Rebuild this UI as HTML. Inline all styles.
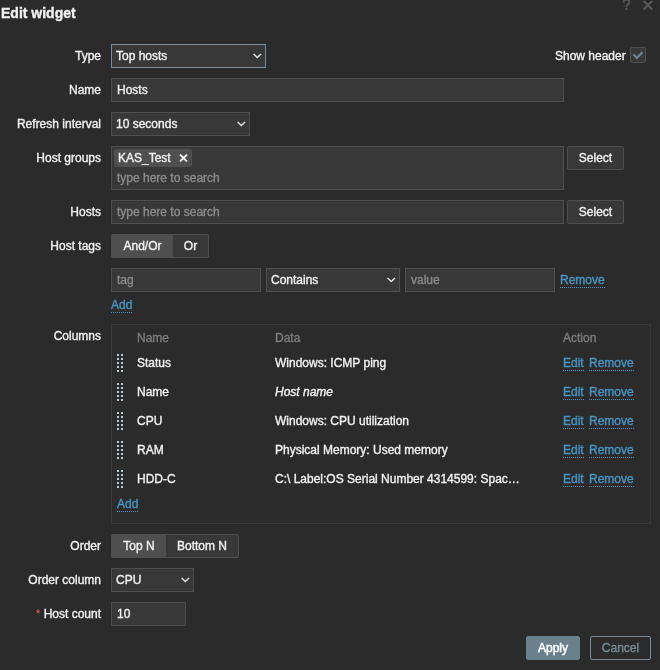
<!DOCTYPE html>
<html><head><meta charset="utf-8">
<style>
html,body{margin:0;padding:0;}
body{-webkit-text-stroke:0.35px;will-change:transform;width:660px;height:670px;overflow:hidden;background:#2b2b2b;position:relative;font-family:"Liberation Sans",sans-serif;font-size:12px;color:#f2f2f2;}
.a{position:absolute;white-space:nowrap;}
.lbl{position:absolute;right:559px;height:24px;line-height:24px;text-align:right;white-space:nowrap;}
.inp{position:absolute;box-sizing:border-box;height:24px;background:#383838;border:1px solid #4f4f4f;line-height:22px;padding-left:5px;white-space:nowrap;overflow:hidden;}
.ph{color:#8c8c8c;}
.chev{position:absolute;top:8px;width:9px;height:6px;}
.btn{position:absolute;box-sizing:border-box;height:24px;background:#383838;border:1px solid #4f4f4f;border-radius:2px;line-height:22px;text-align:center;}
.lnk{position:absolute;color:#4796c4;white-space:nowrap;line-height:14px;border-bottom:1px dotted #4796c4;}
.th{position:absolute;color:#7d7d7d;line-height:24px;}
.td{position:absolute;line-height:24px;white-space:nowrap;}
.drag{position:absolute;left:117px;width:6px;height:18px;}
</style></head><body>

<div class="a" style="left:1px;top:3px;font-size:14px;font-weight:bold;line-height:20px;">Edit widget</div>

<!-- help / close -->
<svg class="a" style="left:620px;top:-2px" width="40" height="14" viewBox="0 0 40 14">
  <path d="M3.6 4.6 Q3.6 1.6 6.5 1.6 Q9.4 1.6 9.4 4 Q9.4 5.4 8 6.4 Q6.5 7.4 6.5 9" fill="none" stroke="#575757" stroke-width="1.9"/>
  <rect x="5.5" y="10" width="2" height="2" fill="#575757"/>
  <path d="M23.6 3 L32.2 11.6 M32.2 3 L23.6 11.6" stroke="#575757" stroke-width="2.1"/>
</svg>

<!-- Type -->
<div class="lbl" style="top:44px">Type</div>
<div class="inp" style="left:111px;top:44px;width:155px;border-color:#768d99;padding-left:4px;">Top hosts
  <svg class="chev" style="left:141px" viewBox="0 0 9 6"><path d="M0.6 0.9 L4.3 4.6 L8 0.9" fill="none" stroke="#e6e6e6" stroke-width="1.35"/></svg>
</div>
<div class="a" style="left:555px;top:44px;line-height:24px;">Show header</div>
<div class="a" style="left:630px;top:47px;width:14px;height:14px;background:#383838;border:1px solid #4f4f4f;border-radius:2px;">
  <svg width="14" height="14" viewBox="0 0 14 14" style="position:absolute;left:0;top:0"><path d="M2.3 6.3 L5.9 9.9 L11.3 4.2" fill="none" stroke="#6c8796" stroke-width="2.1"/></svg>
</div>

<!-- Name -->
<div class="lbl" style="top:78px">Name</div>
<div class="inp" style="left:111px;top:78px;width:453px;">Hosts</div>

<!-- Refresh interval -->
<div class="lbl" style="top:112px">Refresh interval</div>
<div class="inp" style="left:111px;top:112px;width:139px;padding-left:4px;">10 seconds
  <svg class="chev" style="left:125px" viewBox="0 0 9 6"><path d="M0.6 0.9 L4.3 4.6 L8 0.9" fill="none" stroke="#e6e6e6" stroke-width="1.35"/></svg>
</div>

<!-- Host groups -->
<div class="lbl" style="top:146px">Host groups</div>
<div class="inp" style="left:111px;top:146px;width:453px;height:44px;padding:0;">
  <div class="a" style="left:2px;top:2px;width:78px;height:18px;background:#4f4f4f;border-radius:2px;line-height:18px;">
    <span class="a" style="left:4px;top:0">KAS_Test</span>
    <svg class="a" style="left:65px;top:5px" width="9" height="8" viewBox="0 0 9 8"><path d="M1 0.5 L8 7.5 M8 0.5 L1 7.5" stroke="#f2f2f2" stroke-width="1.8"/></svg>
  </div>
  <span class="a ph" style="left:5px;top:20px;line-height:22px;">type here to search</span>
</div>
<div class="btn" style="left:567px;top:146px;width:57px;">Select</div>

<!-- Hosts -->
<div class="lbl" style="top:200px">Hosts</div>
<div class="inp ph" style="left:111px;top:200px;width:453px;">type here to search</div>
<div class="btn" style="left:567px;top:200px;width:57px;">Select</div>

<!-- Host tags -->
<div class="lbl" style="top:234px">Host tags</div>
<div class="a" style="left:111px;top:234px;width:96px;height:22px;border:1px solid #4f4f4f;border-radius:2px;background:#383838;overflow:hidden;">
  <div class="a" style="left:0;top:0;width:61px;height:22px;background:#4f4f4f;line-height:22px;text-align:center;">And/Or</div>
  <div class="a" style="left:61px;top:0;width:35px;height:22px;line-height:22px;text-align:center;">Or</div>
</div>

<div class="inp ph" style="left:111px;top:268px;width:150px;">tag</div>
<div class="inp" style="left:266px;top:268px;width:134px;padding-left:4px;">Contains
  <svg class="chev" style="left:120px" viewBox="0 0 9 6"><path d="M0.6 0.9 L4.3 4.6 L8 0.9" fill="none" stroke="#e6e6e6" stroke-width="1.35"/></svg>
</div>
<div class="inp ph" style="left:405px;top:268px;width:150px;">value</div>
<div class="lnk" style="left:560px;top:273px;">Remove</div>
<div class="lnk" style="left:111px;top:298px;">Add</div>

<!-- Columns -->
<div class="lbl" style="top:324px;line-height:24px;">Columns</div>
<div class="a" style="left:111px;top:324px;width:538px;height:198px;border:1px solid #383838;"></div>
<div class="th" style="left:137px;top:326px">Name</div>
<div class="th" style="left:275px;top:326px">Data</div>
<div class="th" style="left:563px;top:326px">Action</div>

<svg class="drag" style="top:354px" viewBox="0 0 6 18" fill="#bccdd5"><rect x="0" y="0" width="2" height="2"/><rect x="4" y="0" width="2" height="2"/><rect x="0" y="4" width="2" height="2"/><rect x="4" y="4" width="2" height="2"/><rect x="0" y="8" width="2" height="2"/><rect x="4" y="8" width="2" height="2"/><rect x="0" y="12" width="2" height="2"/><rect x="4" y="12" width="2" height="2"/><rect x="0" y="16" width="2" height="2"/><rect x="4" y="16" width="2" height="2"/></svg>
<div class="td" style="left:137px;top:351px">Status</div>
<div class="td" style="left:275px;top:351px;">Windows: ICMP ping</div>
<div class="lnk" style="left:563px;top:356px">Edit</div>
<div class="lnk" style="left:589px;top:356px">Remove</div>
<svg class="drag" style="top:383px" viewBox="0 0 6 18" fill="#bccdd5"><rect x="0" y="0" width="2" height="2"/><rect x="4" y="0" width="2" height="2"/><rect x="0" y="4" width="2" height="2"/><rect x="4" y="4" width="2" height="2"/><rect x="0" y="8" width="2" height="2"/><rect x="4" y="8" width="2" height="2"/><rect x="0" y="12" width="2" height="2"/><rect x="4" y="12" width="2" height="2"/><rect x="0" y="16" width="2" height="2"/><rect x="4" y="16" width="2" height="2"/></svg>
<div class="td" style="left:137px;top:380px">Name</div>
<div class="td" style="left:275px;top:380px; font-style:italic;">Host name</div>
<div class="lnk" style="left:563px;top:385px">Edit</div>
<div class="lnk" style="left:589px;top:385px">Remove</div>
<svg class="drag" style="top:412px" viewBox="0 0 6 18" fill="#bccdd5"><rect x="0" y="0" width="2" height="2"/><rect x="4" y="0" width="2" height="2"/><rect x="0" y="4" width="2" height="2"/><rect x="4" y="4" width="2" height="2"/><rect x="0" y="8" width="2" height="2"/><rect x="4" y="8" width="2" height="2"/><rect x="0" y="12" width="2" height="2"/><rect x="4" y="12" width="2" height="2"/><rect x="0" y="16" width="2" height="2"/><rect x="4" y="16" width="2" height="2"/></svg>
<div class="td" style="left:137px;top:409px">CPU</div>
<div class="td" style="left:275px;top:409px;">Windows: CPU utilization</div>
<div class="lnk" style="left:563px;top:414px">Edit</div>
<div class="lnk" style="left:589px;top:414px">Remove</div>
<svg class="drag" style="top:441px" viewBox="0 0 6 18" fill="#bccdd5"><rect x="0" y="0" width="2" height="2"/><rect x="4" y="0" width="2" height="2"/><rect x="0" y="4" width="2" height="2"/><rect x="4" y="4" width="2" height="2"/><rect x="0" y="8" width="2" height="2"/><rect x="4" y="8" width="2" height="2"/><rect x="0" y="12" width="2" height="2"/><rect x="4" y="12" width="2" height="2"/><rect x="0" y="16" width="2" height="2"/><rect x="4" y="16" width="2" height="2"/></svg>
<div class="td" style="left:137px;top:438px">RAM</div>
<div class="td" style="left:275px;top:438px;">Physical Memory: Used memory</div>
<div class="lnk" style="left:563px;top:443px">Edit</div>
<div class="lnk" style="left:589px;top:443px">Remove</div>
<svg class="drag" style="top:470px" viewBox="0 0 6 18" fill="#bccdd5"><rect x="0" y="0" width="2" height="2"/><rect x="4" y="0" width="2" height="2"/><rect x="0" y="4" width="2" height="2"/><rect x="4" y="4" width="2" height="2"/><rect x="0" y="8" width="2" height="2"/><rect x="4" y="8" width="2" height="2"/><rect x="0" y="12" width="2" height="2"/><rect x="4" y="12" width="2" height="2"/><rect x="0" y="16" width="2" height="2"/><rect x="4" y="16" width="2" height="2"/></svg>
<div class="td" style="left:137px;top:467px">HDD-C</div>
<div class="td" style="left:275px;top:467px;">C:\ Label:OS Serial Number 4314599: Spac…</div>
<div class="lnk" style="left:563px;top:472px">Edit</div>
<div class="lnk" style="left:589px;top:472px">Remove</div>

<div class="lnk" style="left:117px;top:497px;">Add</div>

<!-- Order -->
<div class="lbl" style="top:534px">Order</div>
<div class="a" style="left:111px;top:534px;width:126px;height:22px;border:1px solid #4f4f4f;border-radius:2px;background:#383838;overflow:hidden;">
  <div class="a" style="left:0;top:0;width:54px;height:22px;background:#4f4f4f;line-height:22px;text-align:center;">Top N</div>
  <div class="a" style="left:54px;top:0;width:72px;height:22px;line-height:22px;text-align:center;">Bottom N</div>
</div>

<div class="lbl" style="top:568px">Order column</div>
<div class="inp" style="left:111px;top:568px;width:83px;padding-left:4px;">CPU
  <svg class="chev" style="left:69px" viewBox="0 0 9 6"><path d="M0.6 0.9 L4.3 4.6 L8 0.9" fill="none" stroke="#e6e6e6" stroke-width="1.35"/></svg>
</div>

<div class="lbl" style="top:602px"><span style="color:#e05a5a;-webkit-text-stroke:0;">*</span> Host count</div>
<div class="inp" style="left:111px;top:602px;width:75px;">10</div>

<div class="btn" style="left:526px;top:636px;width:54px;background:#6a818d;border-color:#6a818d;color:#fff;-webkit-text-stroke:0.5px;">Apply</div>
<div class="btn" style="left:590px;top:636px;width:61px;background:transparent;border-color:#768d99;color:#768d99;">Cancel</div>

</body></html>
